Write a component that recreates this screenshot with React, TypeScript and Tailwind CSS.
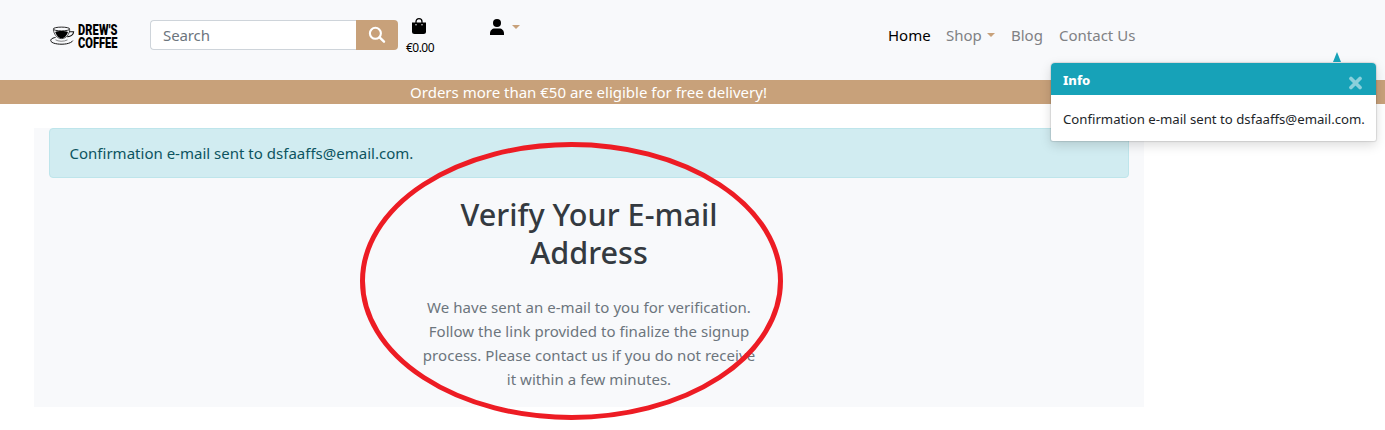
import React from "react";

function Logo() {
  return (
    <a href="#" aria-label="Drew's Coffee" className="ml-[50px] mt-[23px] flex h-[26px] w-[68px] shrink-0">
      <svg width="26" height="24" viewBox="0 0 26 24" fill="none" stroke="#111" className="mt-[3px] shrink-0">
        <ellipse cx="11.5" cy="3" rx="8.3" ry="1.9" strokeWidth=".9" />
        <path d="M3.3 3.7C4 8.2 7 12.6 11.6 12.6S19.3 8.2 19.8 3.7" strokeWidth=".7" />
        <path d="M5.2 6C8 4.6 15 4.6 18 6C16.8 9.7 14.5 12.3 11.6 12.3S6.4 9.7 5.2 6Z" fill="#000" stroke="none" />
        <path d="M19 5.8H23.6C23.6 8.8 20.5 10.8 17.3 10.6" strokeWidth="1.1" />
        <path d="M5.6 11.4C1.5 12.2 0 13.8 1.1 15.5C3 18 11 18.8 16.5 17.8C19.5 17.2 22 16.2 22.8 14.6" strokeWidth="1" />
        <path d="M5.5 13.8C8 15.6 14 15.8 17.5 13.9" strokeWidth=".5" />
      </svg>
      <span className="ml-[2px] mt-px block w-[40px] origin-left scale-x-[0.79] whitespace-nowrap font-['Roboto'] text-[14px] leading-[13px] font-black text-black">
        <span className="block tracking-[0.15px]">DREW'S</span>
        <span className="block">COFFEE</span>
      </span>
    </a>
  );
}

function Caret({ className = "" }: { className?: string }) {
  return (
    <svg width="8" height="4" viewBox="0 0 8 4" className={className}>
      <path d="M0 0H8L4 4Z" fill="#c8a17a" />
    </svg>
  );
}

function Header() {
  return (
    <header className="flex h-20 items-start bg-[#f8f9fb]">
      <Logo />
      <form className="ml-8 mt-5 flex h-[30px] w-[248px] shrink-0">
        <div className="flex w-[206px] items-center rounded-l-[4px] border border-r-0 border-[#ced4da] bg-white pl-3 text-[15px] tracking-[-0.1px] text-[#6c757d]">
          Search
        </div>
        <button type="button" aria-label="Submit search" className="flex w-[42px] items-center justify-center rounded-r-[4px] bg-[#c8a17a]">
          <svg width="18" height="18" viewBox="0 0 18 18" fill="none" stroke="#fff" className="ml-[-1px]">
            <circle cx="7.4" cy="7.3" r="5.5" strokeWidth="2.1" />
            <path d="M11.6 11.4L16 15.7" strokeWidth="2.4" strokeLinecap="round" />
          </svg>
        </button>
      </form>
      <a href="#" className="ml-[7px] mt-[18px] flex w-[30px] flex-col items-center text-black">
        <svg width="16" height="16" viewBox="0 0 16 16" className="mr-[3px]">
          <path d="M5 6V3.7C5 1.8 6.2.7 8 .7S11 1.8 11 3.7V6" fill="none" stroke="#000" strokeWidth="1.3" />
          <path d="M1 4.5H15V13.5Q15 16 12.5 16H3.5Q1 16 1 13.5Z" />
          <circle cx="5" cy="6.7" r=".7" fill="#fff" />
          <circle cx="11" cy="6.7" r=".7" fill="#fff" />
        </svg>
        <span className="mt-[6px] text-[12px] leading-4 tracking-[-0.5px]">€0.00</span>
      </a>
      <a href="#" aria-label="Account" className="ml-[55px] mt-[18px] flex">
        <svg width="14" height="17" viewBox="0 0 14 17">
          <circle cx="7" cy="5" r="4" />
          <path d="M0 17V15.5C0 12.5 2 10.5 4.8 10.5H9.2C12 10.5 14 12.5 14 15.5V17Z" />
        </svg>
        <Caret className="ml-2 mt-[7px]" />
      </a>
      <nav className="ml-auto mr-[249px] mt-[23px] flex h-6 items-center whitespace-nowrap text-[15px] text-[#808184]">
        <a href="#" className="w-[43px] text-black">Home</a>
        <a href="#" className="ml-[15px] flex w-[49px] items-center">
          Shop
          <Caret className="ml-auto" />
        </a>
        <a href="#" className="ml-4 w-8">Blog</a>
        <a href="#" className="ml-4 w-[77px]">Contact Us</a>
      </nav>
    </header>
  );
}

function Toast() {
  return (
    <aside className="absolute left-[1051px] top-[52px] w-[325px]">
      <svg width="8" height="10" viewBox="0 0 8 10" className="ml-[282px] block">
        <path d="M4 0L8 10H0Z" fill="#17a2b8" />
      </svg>
      <div className="mt-px overflow-hidden rounded-[4px] rounded-b-[2px] bg-white shadow-[0_4px_12px_rgba(0,0,0,0.15),0_0_1px_1px_rgba(0,0,0,0.1)]">
        <div className="flex h-8 items-center justify-between bg-[#17a2b8] pl-3 pr-[14px]">
          <strong className="mt-[3px] text-[13px] font-extrabold text-white">Info</strong>
          <svg width="13" height="14" viewBox="0 0 12 13" className="mt-[7px]">
            <path d="M1.8 2.3L10.2 10.7M10.2 2.3L1.8 10.7" stroke="#8bd0db" strokeWidth="3.4" strokeLinecap="round" />
          </svg>
        </div>
        <p className="h-[46px] whitespace-nowrap pl-3 text-[13.2px] leading-[49px] text-[#212529]">
          Confirmation e-mail sent to dsfaaffs@email.com.
        </p>
      </div>
    </aside>
  );
}

export default function App() {
  return (
    <div className="relative h-[430px] w-[1385px] overflow-hidden bg-white font-['Noto_Sans',sans-serif]">
      <Header />
      <div className="h-6 bg-[#c8a17a]">
        <p className="w-[1177px] whitespace-nowrap text-center text-[15px] leading-6 text-white">
          Orders more than €50 are eligible for free delivery!
        </p>
      </div>
      <main className="ml-[34px] mt-6 h-[279px] w-[1110px] bg-[#f8f9fb] px-[15px]">
        <div className="h-[50px] rounded-[4px] border border-[#bee5eb] bg-[#d1ecf1] pl-[19.5px] text-[15px] leading-[48px] tracking-[0.01px] text-[#0c5460]">
          Confirmation e-mail sent to dsfaaffs@email.com.
        </div>
        <section className="mt-[17px] whitespace-nowrap text-center">
          <h1 className="text-[30.6px] leading-[38px] font-medium text-[#343a40]">
            Verify Your E-mail
            <br />
            Address
          </h1>
          <p className="mt-6 text-[15px] leading-6 tracking-[0.04px] text-[#6c757d]">
            We have sent an e-mail to you for verification.
            <br />
            Follow the link provided to finalize the signup
            <br />
            process. Please contact us if you do not receive
            <br />
            it within a few minutes.
          </p>
        </section>
      </main>
      <svg width="424" height="280" viewBox="0 0 424 280" className="pointer-events-none absolute left-[360px] top-[141px]">
        <ellipse cx="211.5" cy="140" rx="209" ry="136.5" fill="none" stroke="#ed1c24" strokeWidth="5" />
      </svg>
      <Toast />
    </div>
  );
}
